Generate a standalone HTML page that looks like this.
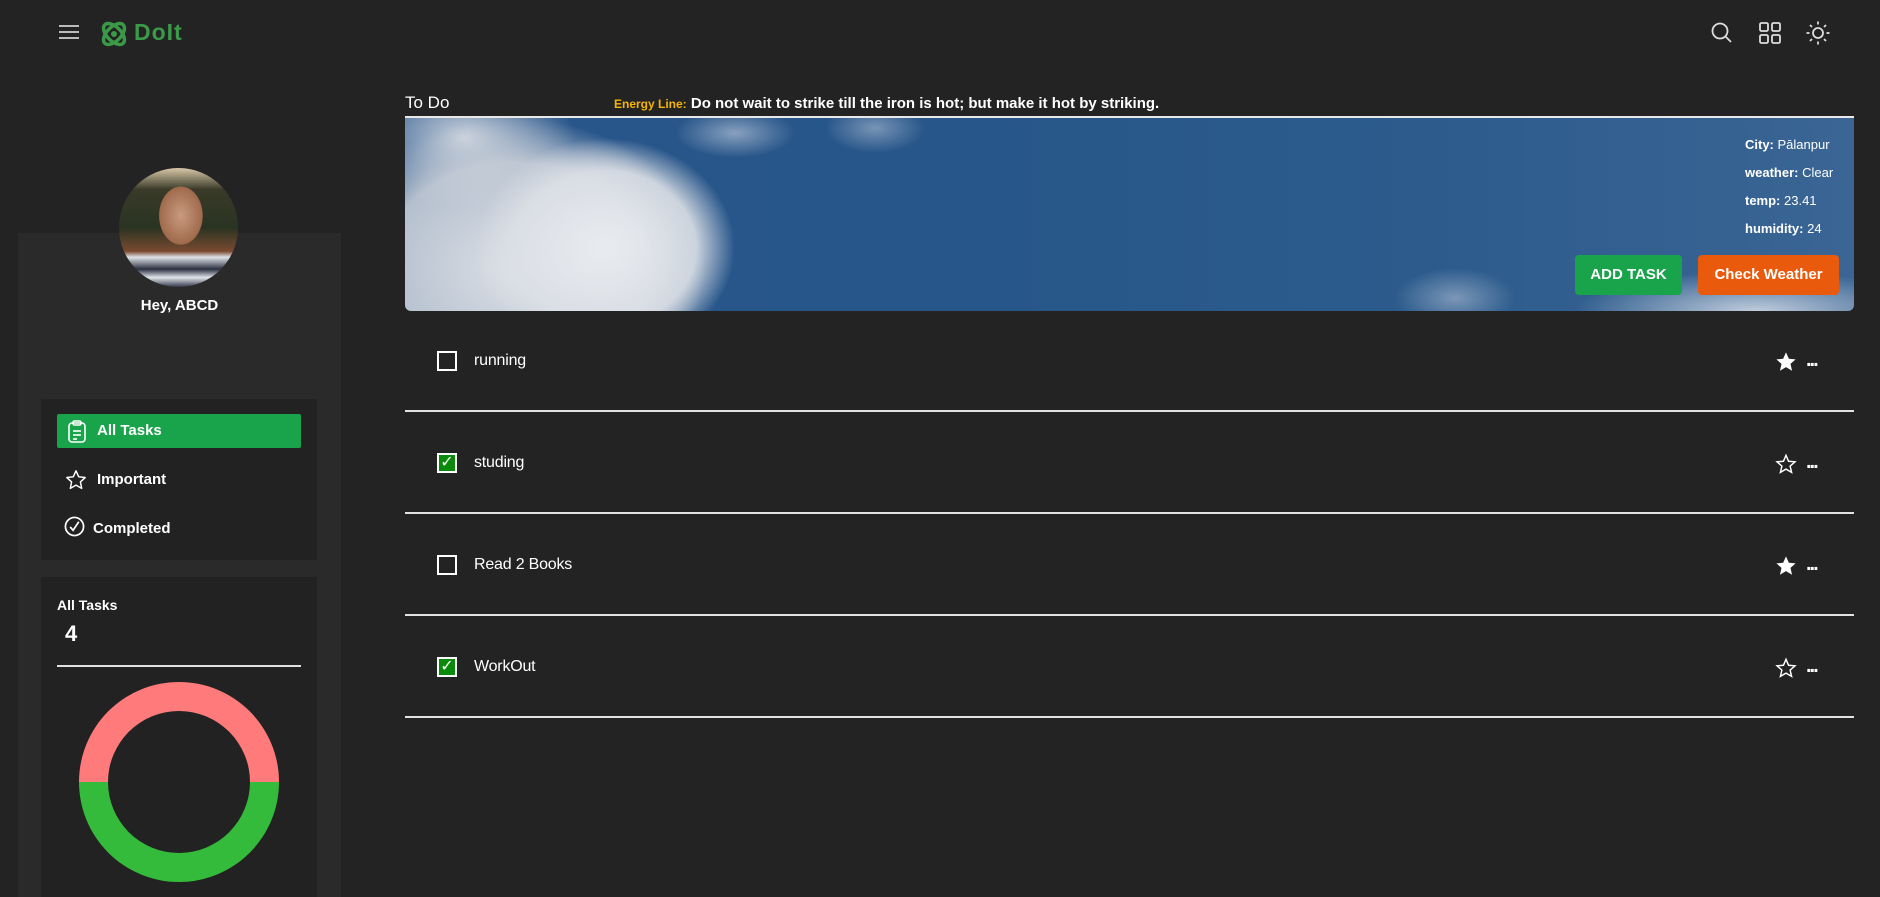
<!DOCTYPE html>
<html><head><meta charset="utf-8"><style>
*{margin:0;padding:0;box-sizing:border-box}
body{width:1880px;height:897px;background:#232323;font-family:"Liberation Sans","DejaVu Sans",sans-serif;color:#fff;position:relative;overflow:hidden}
.a{position:absolute}
.sep{position:absolute;left:405px;width:1449px;height:2px;background:#e2e2e2}
.cb{position:absolute;left:437px;width:20px;height:20px;border:2px solid #fff}
.cb.on{background:#0a8a0a;color:#fff;font-size:16px;line-height:16px;text-align:center}
.tt{position:absolute;left:474px;font-size:16px;letter-spacing:-0.2px}
.star{position:absolute;left:1775px;width:22px;height:22px}
.dots{position:absolute;left:1806px;font-size:20px;font-weight:bold;letter-spacing:-2px}
.wt{position:absolute;left:1745px;font-size:13px}
</style></head><body>
<!-- header -->
<svg class="a" style="left:59px;top:24px" width="20" height="16"><g stroke="#bbb" stroke-width="2"><line x1="0" y1="2" x2="20" y2="2"/><line x1="0" y1="8" x2="20" y2="8"/><line x1="0" y1="14" x2="20" y2="14"/></g></svg>
<svg class="a" style="left:99px;top:19px" width="30" height="30" viewBox="0 0 30 30"><g fill="none" stroke="#3a9a48" stroke-width="3.5"><ellipse cx="15" cy="15" rx="13" ry="7" transform="rotate(45 15 15)"/><ellipse cx="15" cy="15" rx="13" ry="7" transform="rotate(-45 15 15)"/></g><circle cx="15" cy="15" r="3" fill="#3a9a48"/></svg>
<div class="a" style="left:134px;top:19px;font-size:23px;font-weight:bold;color:#3a9a48;letter-spacing:1px">DoIt</div>
<svg class="a" style="left:1711px;top:22px" width="22" height="22" viewBox="0 0 22 22"><circle cx="9" cy="9" r="7.5" fill="none" stroke="#ddd" stroke-width="1.8"/><line x1="14.5" y1="14.5" x2="20" y2="20" stroke="#ddd" stroke-width="1.8"/></svg>
<svg class="a" style="left:1759px;top:22px" width="22" height="22" viewBox="0 0 22 22"><g fill="none" stroke="#ddd" stroke-width="1.8"><rect x="1" y="1" width="8" height="8" rx="1.5"/><rect x="13" y="1" width="8" height="8" rx="1.5"/><rect x="1" y="13" width="8" height="8" rx="1.5"/><rect x="13" y="13" width="8" height="8" rx="1.5"/></g></svg>
<svg class="a" style="left:1806px;top:21px" width="24" height="24" viewBox="0 0 24 24"><g stroke="#ddd" stroke-width="1.8" fill="none"><circle cx="12" cy="12" r="5"/><line x1="12" y1="0.5" x2="12" y2="3.5"/><line x1="12" y1="20.5" x2="12" y2="23.5"/><line x1="0.5" y1="12" x2="3.5" y2="12"/><line x1="20.5" y1="12" x2="23.5" y2="12"/><line x1="4" y1="4" x2="6" y2="6"/><line x1="18" y1="18" x2="20" y2="20"/><line x1="4" y1="20" x2="6" y2="18"/><line x1="18" y1="6" x2="20" y2="4"/></g></svg>
<!-- sidebar -->
<div class="a" style="left:18px;top:233px;width:323px;height:664px;background:#2a2a2a"></div>
<div class="a" style="left:119px;top:168px;width:119px;height:119px;border-radius:50%;overflow:hidden;background:radial-gradient(ellipse 30% 40% at 52% 40%,#c99a80 0%,#a06a4c 60%,transparent 62%),linear-gradient(180deg,#d9c8a8 0%,#3a3a28 18%,#2a3322 50%,#7a4a30 70%,#dfe3e8 75%,#2a3040 85%,#e0e4ea 92%,#33384a 100%)"></div>
<div class="a" style="left:18px;width:323px;top:297px;text-align:center;font-size:15px;font-weight:bold">Hey, ABCD</div>
<div class="a" style="left:41px;top:399px;width:276px;height:161px;background:#222"></div>
<div class="a" style="left:57px;top:414px;width:244px;height:34px;background:#19a44b;border-radius:2px"></div>
<svg class="a" style="left:67px;top:420px" width="20" height="24" viewBox="0 0 20 24"><g fill="none" stroke="#fff" stroke-width="1.6"><rect x="2" y="3" width="16" height="19" rx="3"/><rect x="6" y="1" width="8" height="4" rx="1.5"/><line x1="6" y1="11" x2="14" y2="11"/><line x1="6" y1="15" x2="14" y2="15"/><line x1="6" y1="19" x2="10" y2="19"/></g></svg>
<div class="a" style="left:97px;top:422px;font-size:15px;font-weight:bold">All Tasks</div>
<svg class="a" style="left:65px;top:469px" width="22" height="22" viewBox="0 0 24 24"><path d="M12 2l3 6.5 7 .8-5.2 4.8 1.4 7L12 17.6 5.8 21.1l1.4-7L2 9.3l7-.8z" fill="none" stroke="#fff" stroke-width="1.6" stroke-linejoin="round"/></svg>
<div class="a" style="left:97px;top:471px;font-size:15px;font-weight:bold">Important</div>
<svg class="a" style="left:64px;top:516px" width="21" height="21" viewBox="0 0 22 22"><circle cx="11" cy="11" r="9.5" fill="none" stroke="#fff" stroke-width="1.8"/><path d="M6.5 11.5l3 3.5 6-9" fill="none" stroke="#fff" stroke-width="1.8"/></svg>
<div class="a" style="left:93px;top:520px;font-size:15px;font-weight:bold">Completed</div>
<div class="a" style="left:41px;top:577px;width:276px;height:320px;background:#222"></div>
<div class="a" style="left:57px;top:597px;font-size:14px;font-weight:bold">All Tasks</div>
<div class="a" style="left:65px;top:621px;font-size:22px;font-weight:bold">4</div>
<div class="a" style="left:57px;top:665px;width:244px;height:2px;background:#e0e0e0"></div>
<svg class="a" style="left:79px;top:682px" width="200" height="200" viewBox="0 0 200 200"><path d="M0 100A100 100 0 0 1 200 100H171A71 71 0 0 0 29 100Z" fill="#ff7b7b"/><path d="M0 100A100 100 0 0 0 200 100H171A71 71 0 0 1 29 100Z" fill="#35bb3b"/></svg>
<!-- main -->
<div class="a" style="left:405px;top:93px;font-size:17px">To Do</div>
<div class="a" style="left:614px;top:95px;font-size:15px;font-weight:bold"><span style="color:#f5b400;font-size:12px">Energy Line:</span> Do not wait to strike till the iron is hot; but make it hot by striking.</div>
<div class="a" style="left:405px;top:116px;width:1449px;height:2px;background:#e8e8e8"></div>
<div class="a" style="left:405px;top:118px;width:1449px;height:193px;border-radius:0 0 6px 6px;overflow:hidden;background:
radial-gradient(ellipse 130px 110px at 200px 130px,rgba(235,237,240,.95) 0%,rgba(220,224,230,.9) 70%,transparent 100%),
radial-gradient(ellipse 190px 150px at 110px 150px,rgba(225,228,233,.97) 0%,rgba(205,210,218,.85) 70%,transparent 100%),
radial-gradient(ellipse 110px 70px at 60px 20px,rgba(220,224,230,.9) 0%,transparent 100%),
radial-gradient(ellipse 60px 25px at 330px 15px,rgba(200,210,225,.6) 0%,transparent 100%),
radial-gradient(ellipse 50px 25px at 470px 10px,rgba(200,210,225,.5) 0%,transparent 100%),
radial-gradient(ellipse 180px 40px at 1350px 193px,rgba(225,230,238,.8) 0%,transparent 100%),
radial-gradient(ellipse 60px 30px at 1050px 180px,rgba(200,210,225,.5) 0%,transparent 100%),
linear-gradient(90deg,#28558a 0%,#27568a 40%,#2c5b8c 70%,#3a6594 100%)"></div>
<div class="wt" style="top:137px"><b>City:</b> Pālanpur</div>
<div class="wt" style="top:165px"><b>weather:</b> Clear</div>
<div class="wt" style="top:193px"><b>temp:</b> 23.41</div>
<div class="wt" style="top:221px"><b>humidity:</b> 24</div>
<div class="a" style="left:1575px;top:255px;width:107px;height:40px;background:#19a44b;border-radius:4px;font-size:15px;font-weight:bold;text-align:center;line-height:40px">ADD TASK</div>
<div class="a" style="left:1698px;top:255px;width:141px;height:40px;background:#ea5a0c;border-radius:4px;font-size:15px;font-weight:bold;text-align:center;line-height:40px">Check Weather</div>
<!-- tasks -->
<div class="cb" style="top:351px"></div><div class="tt" style="top:352px">running</div>
<svg class="star" style="top:351px" viewBox="0 0 24 24"><path d="M12 1.5l3.1 7 7.4.6-5.6 5 1.7 7.4L12 17.6 5.4 21.5l1.7-7.4-5.6-5 7.4-.6z" fill="#fff"/></svg><div class="dots" style="top:349px">...</div>
<div class="sep" style="top:410px"></div>
<div class="cb on" style="top:453px">✓</div><div class="tt" style="top:454px">studing</div>
<svg class="star" style="top:453px" viewBox="0 0 24 24"><path d="M12 2.5l2.8 6.5 7 .6-5.3 4.7 1.6 6.9L12 17.6l-6.1 3.6 1.6-6.9-5.3-4.7 7-.6z" fill="none" stroke="#fff" stroke-width="1.6"/></svg><div class="dots" style="top:451px">...</div>
<div class="sep" style="top:512px"></div>
<div class="cb" style="top:555px"></div><div class="tt" style="top:556px">Read 2 Books</div>
<svg class="star" style="top:555px" viewBox="0 0 24 24"><path d="M12 1.5l3.1 7 7.4.6-5.6 5 1.7 7.4L12 17.6 5.4 21.5l1.7-7.4-5.6-5 7.4-.6z" fill="#fff"/></svg><div class="dots" style="top:553px">...</div>
<div class="sep" style="top:614px"></div>
<div class="cb on" style="top:657px">✓</div><div class="tt" style="top:658px">WorkOut</div>
<svg class="star" style="top:657px" viewBox="0 0 24 24"><path d="M12 2.5l2.8 6.5 7 .6-5.3 4.7 1.6 6.9L12 17.6l-6.1 3.6 1.6-6.9-5.3-4.7 7-.6z" fill="none" stroke="#fff" stroke-width="1.6"/></svg><div class="dots" style="top:655px">...</div>
<div class="sep" style="top:716px"></div>
</body></html>
